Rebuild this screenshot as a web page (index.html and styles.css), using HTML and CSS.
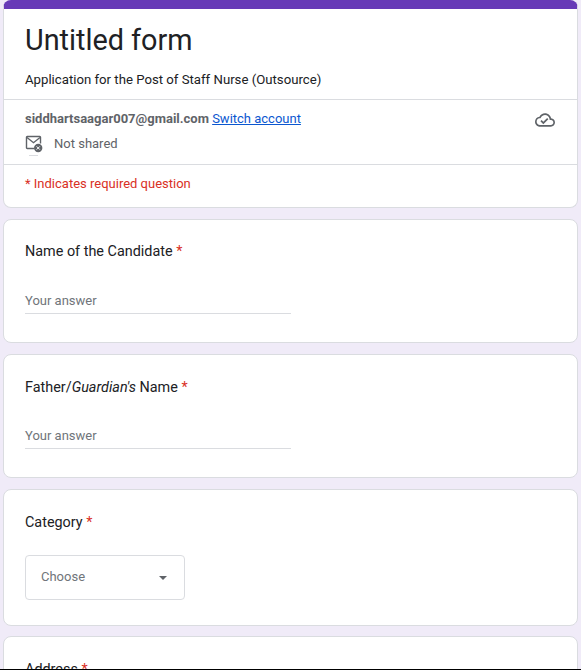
FILE: index.html
```html
<!DOCTYPE html>
<html lang="en">
<head>
    <meta charset="UTF-8">
    <meta name="viewport" content="width=device-width, initial-scale=1.0">
    <title>Untitled form</title>
    <link rel="stylesheet" href="styles.css">
</head>
<body>
<div class="form">
    <div class="card header-card">
        <div class="title-block">
            <h1>Untitled form</h1>
            <p class="description">Application for the Post of Staff Nurse (Outsource)</p>
        </div>
        <div class="account-block">
            <div class="account-info">
                <div class="account-line"><b>siddhartsaagar007@gmail.com</b> <a href="#">Switch account</a></div>
                <div class="shared-line">
                    <span class="mail-icon">
                        <svg width="18" height="18" viewBox="0 0 18 18">
                            <path d="M9.5 13.5H2.2a.7.7 0 0 1-.7-.7V2.2a.7.7 0 0 1 .7-.7h12.6a.7.7 0 0 1 .7.7v6.3" fill="none" stroke="#5f6368" stroke-width="1.4"/>
                            <path d="M2 2.5l6.5 5.2L15 2.5" fill="none" stroke="#5f6368" stroke-width="1.4"/>
                            <circle cx="13.2" cy="13" r="4.2" fill="#5f6368"/>
                            <path d="M11.6 11.4l3.2 3.2M14.8 11.4l-3.2 3.2" stroke="#fff" stroke-width="1"/>
                        </svg>
                    </span>
                    <span>Not shared</span>
                </div>
            </div>
            <svg class="cloud-icon" width="20" height="20" viewBox="0 0 24 24">
                <path d="M19.35 10.04C18.67 6.59 15.64 4 12 4 9.11 4 6.6 5.64 5.35 8.04 2.34 8.36 0 10.91 0 14c0 3.31 2.69 6 6 6h13c2.76 0 5-2.24 5-5 0-2.64-2.05-4.78-4.65-4.96zM19 18H6c-2.21 0-4-1.79-4-4 0-2.05 1.53-3.76 3.56-3.97l1.07-.11.5-.95C8.08 7.14 9.94 6 12 6c2.62 0 4.88 1.86 5.39 4.43l.3 1.5 1.53.11c1.56.1 2.78 1.41 2.78 2.96 0 1.65-1.35 3-3 3zm-9-3.82l-2.09-2.09L6.5 13.5 10 17l6.01-6.01-1.41-1.41z" fill="#5f6368"/>
            </svg>
        </div>
        <div class="required-note">* Indicates required question</div>
    </div>

    <div class="card question question-first">
        <div class="question-title">Name of the Candidate <span class="star">*</span></div>
        <div class="answer">Your answer</div>
    </div>

    <div class="card question">
        <div class="question-title">Father/<i>Guardian's</i> Name <span class="star">*</span></div>
        <div class="answer">Your answer</div>
    </div>

    <div class="card question question-select">
        <div class="question-title">Category <span class="star">*</span></div>
        <div class="dropdown">
            <span>Choose</span>
            <span class="arrow"></span>
        </div>
    </div>

    <div class="card question">
        <div class="question-title">Address <span class="star">*</span></div>
    </div>
</div>
<div class="bottom-line"></div>
</body>
</html>
```

FILE: styles.css
```css
html, body {
    height: 670px;
    overflow: hidden;
}
body {
    margin: 0;
    background-color: #f0ebf8;
    font-family: Roboto, Arial, sans-serif;
    color: #202124;
    font-size: 14px;
}
.form {
    padding: 0 3px;
}
.card {
    background-color: #fff;
    border: 1px solid #dadce0;
    border-radius: 8px;
    margin-bottom: 11px;
}
.header-card {
    border-top: 9px solid #673ab7;
    box-sizing: border-box;
    height: 208px;
}
.title-block {
    padding: 0 21px;
    height: 91px;
    box-sizing: border-box;
    border-bottom: 1px solid #dadce0;
}
h1 {
    margin: 0;
    padding-top: 12px;
    font-size: 28.8px;
    font-weight: 400;
    line-height: 38px;
}
.description {
    margin: 12px 0 0;
    font-size: 13.2px;
    line-height: 18px;
}
.account-block {
    display: flex;
    justify-content: space-between;
    padding: 10px 22px 0 21px;
    height: 65px;
    box-sizing: border-box;
    border-bottom: 1px solid #dadce0;
}
.account-line {
    font-size: 13px;
    line-height: 18px;
    color: #5f6368;
}
.account-line a {
    color: #0b57d0;
}
.shared-line {
    display: flex;
    align-items: center;
    margin-top: 7px;
    color: #5f6368;
    font-size: 13px;
    line-height: 18px;
}
.mail-icon {
    display: flex;
    position: relative;
    width: 29px;
}
.mail-icon::after {
    content: "";
    position: absolute;
    left: 4px;
    top: 20px;
    width: 9px;
    height: 1px;
    background-color: #dadce0;
}
.required-note {
    padding: 10px 21px;
    font-size: 13px;
    line-height: 18px;
    color: #d93025;
}
.question {
    box-sizing: border-box;
    height: 124px;
    padding: 23px 21px 0;
}
.question-first {
    padding-top: 22px;
}
.question-first .answer {
    margin-top: 30px;
}
.question-select {
    height: 137px;
    margin-bottom: 10px;
}
.question-title {
    font-size: 14.4px;
    line-height: 20px;
}
.star {
    color: #d93025;
}
.answer {
    width: 266px;
    margin-top: 29px;
    padding-bottom: 3px;
    border-bottom: 1px solid #dadce0;
    color: #70757a;
    font-size: 13px;
    line-height: 18px;
}
.dropdown {
    display: flex;
    justify-content: space-between;
    align-items: center;
    box-sizing: border-box;
    width: 160px;
    height: 45px;
    margin-top: 22px;
    padding: 0 17px 3px 15px;
    border: 1px solid #dadce0;
    border-radius: 4px;
    color: #70757a;
    font-size: 13px;
}
.arrow {
    width: 0;
    height: 0;
    margin-top: 3px;
    border-left: 4px solid transparent;
    border-right: 4px solid transparent;
    border-top: 4px solid #5f6368;
}
.bottom-line {
    position: fixed;
    left: 0;
    right: 0;
    bottom: 0;
    height: 1px;
    background-color: #000;
}
```
